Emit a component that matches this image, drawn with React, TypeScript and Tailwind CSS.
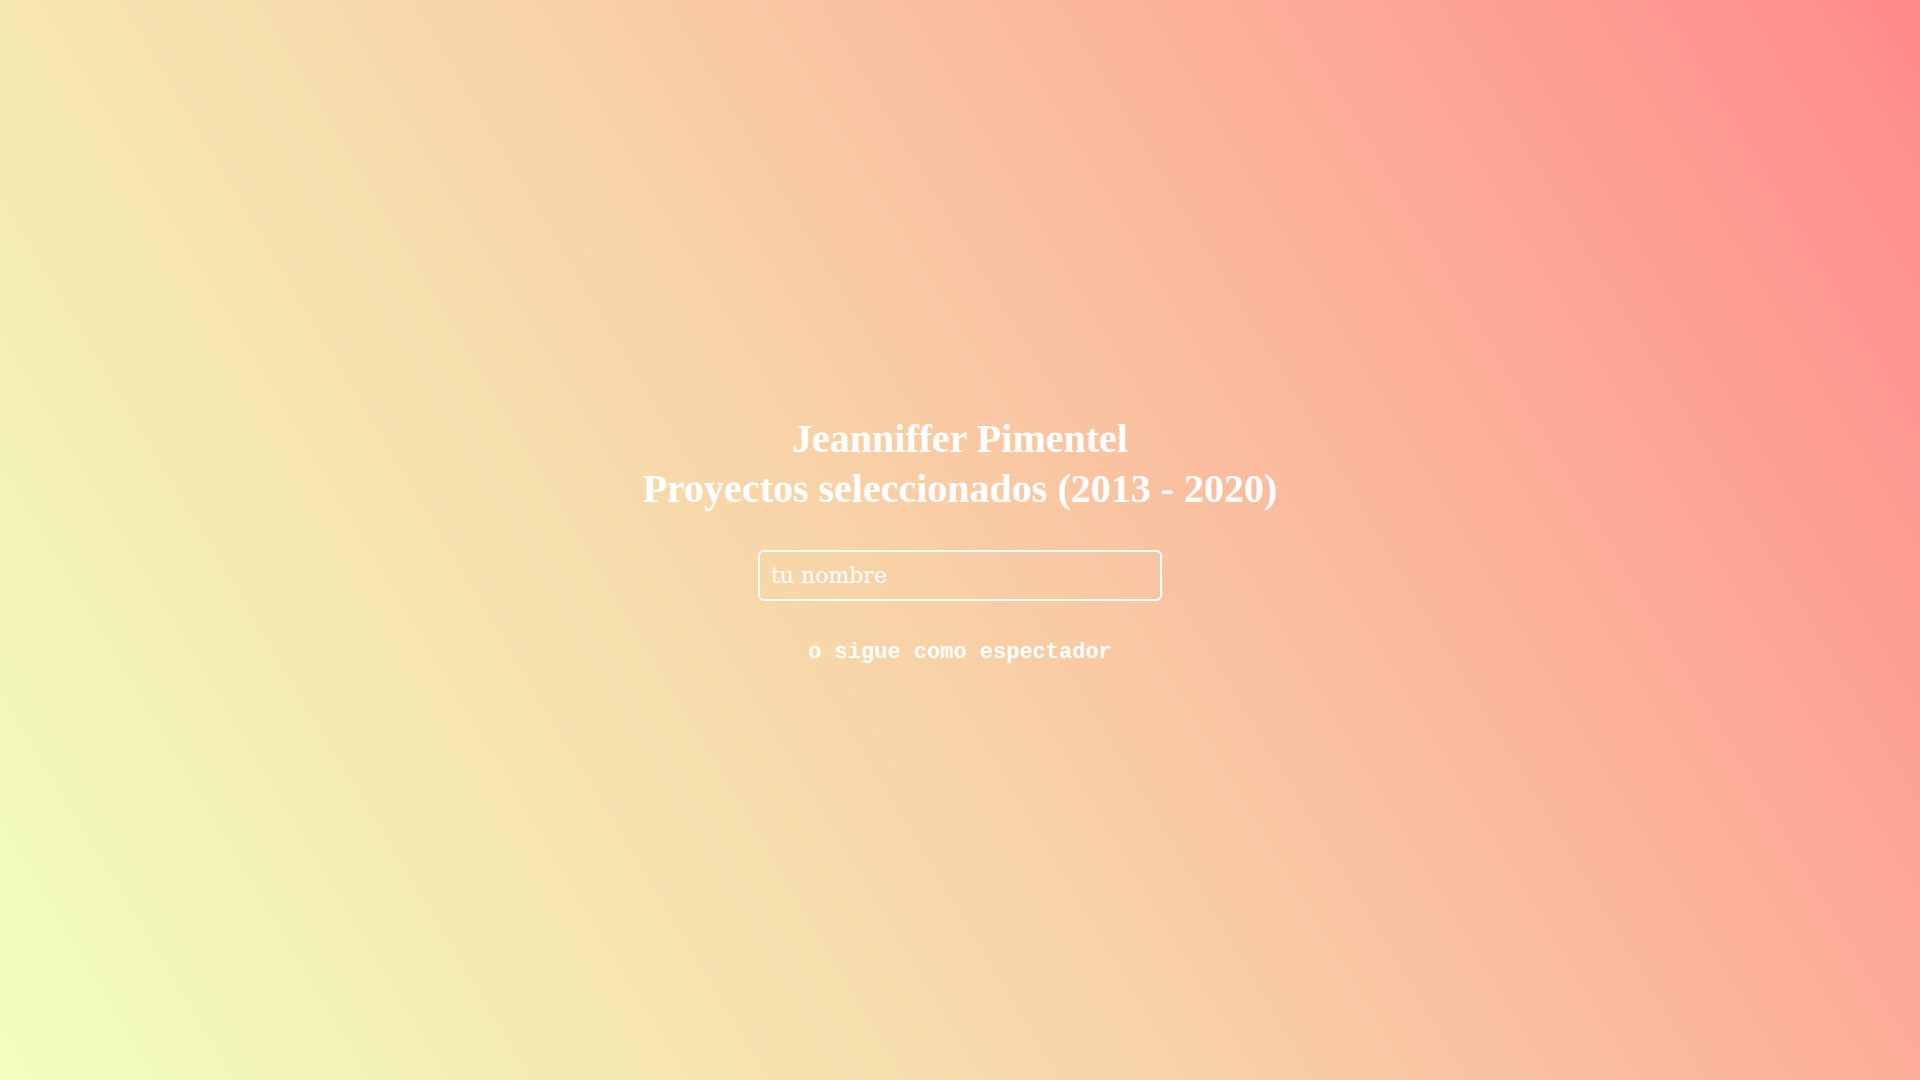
import { useState } from 'react';

export default function App() {
  const [name, setName] = useState('');

  return (
    <div className="h-screen w-full overflow-hidden bg-[linear-gradient(59deg,#f1ffbf,#f8d4a8_45%,#ff8a8a)] flex flex-col items-center justify-center">
      <h1 className="text-center text-white font-bold text-[40px] leading-[50px] font-['Liberation_Serif',serif]">
        Jeanniffer Pimentel
        <br />
        Proyectos seleccionados (2013 - 2020)
      </h1>

      <input
        value={name}
        onChange={(e) => setName(e.target.value)}
        placeholder="tu nombre"
        className="mt-[36px] w-[404px] h-[51px] rounded-md border-2 border-white bg-transparent px-[11px] text-[22px] text-white placeholder:text-white outline-none font-['DejaVu_Serif',serif]"
      />

      <button className="mt-[38px] h-[28px] text-[22px] leading-[28px] font-bold text-white font-['Liberation_Mono',monospace] cursor-pointer">
        o sigue como espectador
      </button>
    </div>
  );
}
